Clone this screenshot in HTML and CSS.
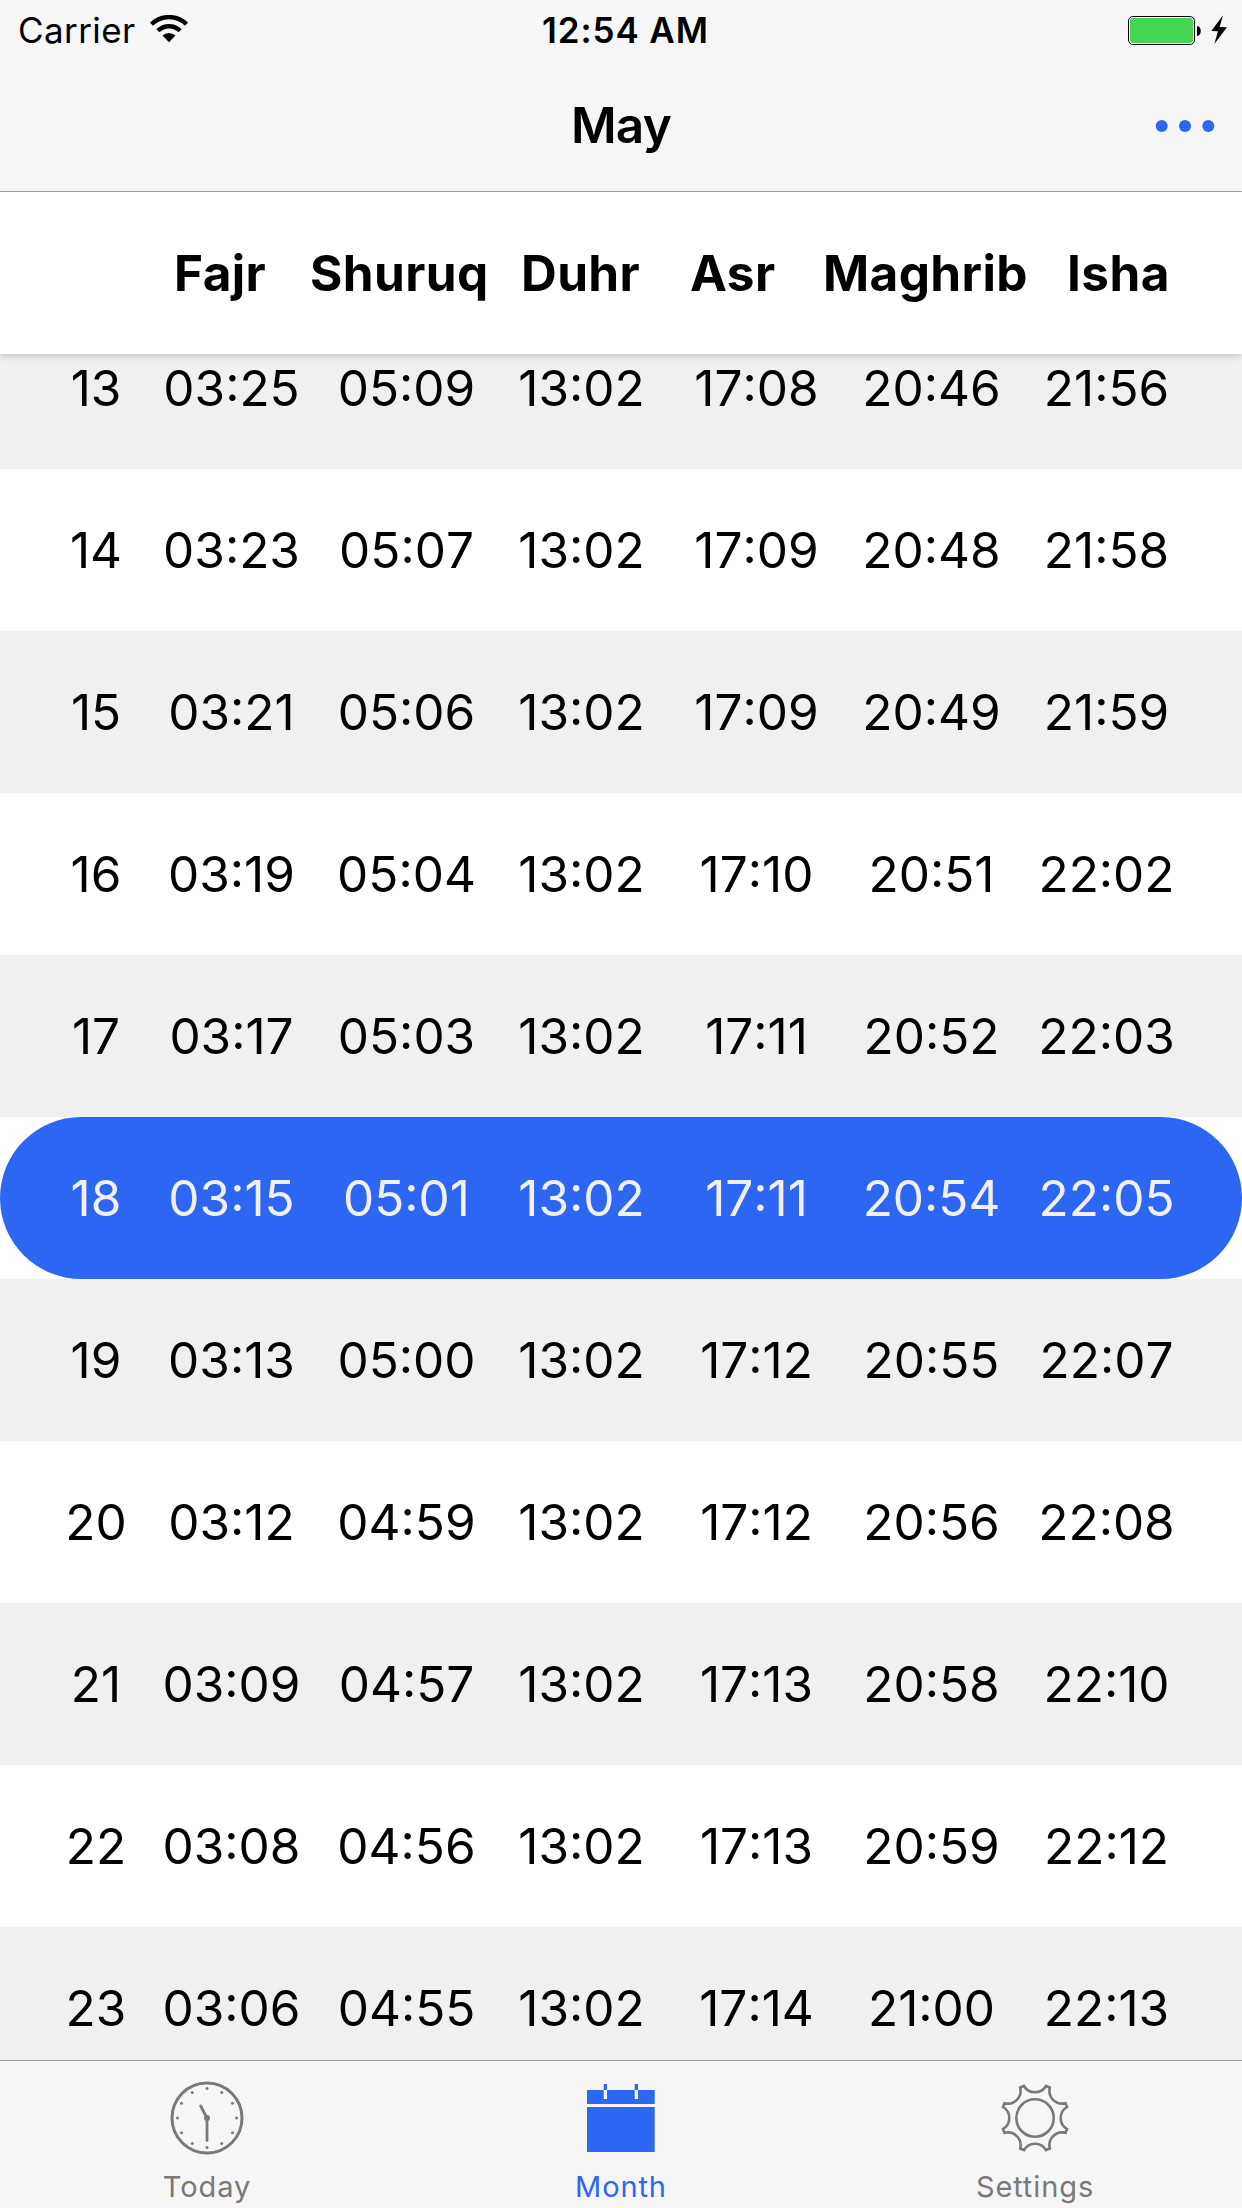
FILE: index.html
```html
<!DOCTYPE html>
<html lang="en">
<head>
<meta charset="utf-8">
<title>May</title>
<link rel="stylesheet" href="styles.css">
</head>
<body>
<div class="app">
  <header class="top">
    <div class="status">
      <div class="status-left"><span class="carrier">Carrier</span>
        <svg class="wifi" width="38" height="28" viewBox="0 0 38 28"><g fill="none" stroke="#000" stroke-width="4.4"><path d="M1.5 9.3A24.8 24.8 0 0 1 36.5 9.3"/><path d="M7.9 15.8A15.8 15.8 0 0 1 30.1 15.8"/></g><path d="M19 27.2L12.6 20.6A9.2 9.2 0 0 1 25.4 20.6Z"/></svg>
      </div>
      <span class="clock">12:54 AM</span>
      <svg class="battery" width="104" height="32" viewBox="0 0 104 32"><rect x="0.5" y="2.5" width="66" height="28" rx="4.5" fill="#fff" stroke="#000"/><rect x="2" y="4" width="63" height="25" rx="3" fill="#44d551"/><path d="M69 12c5 0 5 10 0 10z"/><path d="M95 1.3L83.3 17 90 17.300 86.300 30 99 13.300 91.700 13z"/></svg>
    </div>
    <div class="nav">
      <span></span>
      <h1 class="title">May</h1>
      <svg class="more" width="60" height="14" viewBox="0 0 60 14" fill="#2c66f2"><circle cx="6.700" cy="7" r="6"/><circle cx="30" cy="7" r="6"/><circle cx="53.300" cy="7" r="6"/></svg>
    </div>
  </header>
  <div class="heads"><span>Fajr</span><span>Shuruq</span><span>Duhr</span><span>Asr</span><span>Maghrib</span><span>Isha</span></div>
  <main class="list">
    <div class="row"><span>13</span><span>03:25</span><span>05:09</span><span>13:02</span><span>17:08</span><span>20:46</span><span>21:56</span></div>
    <div class="row"><span>14</span><span>03:23</span><span>05:07</span><span>13:02</span><span>17:09</span><span>20:48</span><span>21:58</span></div>
    <div class="row"><span>15</span><span>03:21</span><span>05:06</span><span>13:02</span><span>17:09</span><span>20:49</span><span>21:59</span></div>
    <div class="row"><span>16</span><span>03:19</span><span>05:04</span><span>13:02</span><span>17:10</span><span>20:51</span><span>22:02</span></div>
    <div class="row"><span>17</span><span>03:17</span><span>05:03</span><span>13:02</span><span>17:11</span><span>20:52</span><span>22:03</span></div>
    <div class="row current"><span>18</span><span>03:15</span><span>05:01</span><span>13:02</span><span>17:11</span><span>20:54</span><span>22:05</span></div>
    <div class="row"><span>19</span><span>03:13</span><span>05:00</span><span>13:02</span><span>17:12</span><span>20:55</span><span>22:07</span></div>
    <div class="row"><span>20</span><span>03:12</span><span>04:59</span><span>13:02</span><span>17:12</span><span>20:56</span><span>22:08</span></div>
    <div class="row"><span>21</span><span>03:09</span><span>04:57</span><span>13:02</span><span>17:13</span><span>20:58</span><span>22:10</span></div>
    <div class="row"><span>22</span><span>03:08</span><span>04:56</span><span>13:02</span><span>17:13</span><span>20:59</span><span>22:12</span></div>
    <div class="row"><span>23</span><span>03:06</span><span>04:55</span><span>13:02</span><span>17:14</span><span>21:00</span><span>22:13</span></div>
  </main>
  <nav class="tabs">
    <div class="tab">
      <svg width="80" height="80" viewBox="-40 -40 80 80" fill="#797979"><circle r="35" fill="none" stroke="#797979" stroke-width="3"/><circle r="3"/><path d="M0 0V22.500M0 0L-6.300-12" stroke="#797979" stroke-width="2.800" stroke-linecap="round"/><circle cy="-29.500" r="1.500"/><circle cy="29.500" r="1.500"/><circle cx="29.500" r="1.500"/><circle cx="-29.500" r="1.500"/><circle cx="14.750" cy="-25.500" r="1.500"/><circle cx="25.500" cy="-14.750" r="1.500"/><circle cx="25.500" cy="14.750" r="1.500"/><circle cx="14.750" cy="25.500" r="1.500"/><circle cx="-14.750" cy="25.500" r="1.500"/><circle cx="-25.500" cy="14.750" r="1.500"/><circle cx="-25.500" cy="-14.750" r="1.500"/><circle cx="-14.750" cy="-25.500" r="1.500"/></svg>
      <span>Today</span>
    </div>
    <div class="tab active">
      <svg width="80" height="80" viewBox="0 0 80 80" fill="#2c66f2"><path d="M6 12H73.700V26H6zM6 29H73.700V74H6z"/><path d="M22.700 12h3.300v9h-3.300zM53.700 12h3.300v9h-3.300z" fill="#f6f6f6"/><path d="M22.700 6h3.300v6h-3.300zM53.700 6h3.300v6h-3.300z"/></svg>
      <span>Month</span>
    </div>
    <div class="tab">
      <svg width="80" height="80" viewBox="-40 -40 80 80" fill="none" stroke="#797979" stroke-width="2.600"><circle r="18.700"/><path d="M-11-32A12.750 12.750 0 0 0 11-32L14.850-30.400A12.750 12.750 0 0 0 30.400-14.850L32-11A12.750 12.750 0 0 0 32 11L30.400 14.850A12.750 12.750 0 0 0 14.850 30.400L11 32A12.750 12.750 0 0 0-11 32L-14.850 30.400A12.750 12.750 0 0 0-30.400 14.850L-32 11A12.750 12.750 0 0 0-32-11L-30.400-14.850A12.750 12.750 0 0 0-14.850-30.400Z"/></svg>
      <span>Settings</span>
    </div>
  </nav>
</div>
</body>
</html>
```

FILE: styles.css
```css
* { box-sizing: border-box; }
body { margin: 0; font-family: Inter, "Liberation Sans", sans-serif; color: #000; background: #fff; }
svg { display: block; flex: none; }
.app { width: 1242px; height: 2208px; display: flex; flex-direction: column; overflow: hidden; }
.top { height: 192px; flex: none; background: #f6f6f6; border-bottom: 1px solid #a0a0a0; }
.status { height: 60px; display: grid; grid-template-columns: 1fr auto 1fr; align-items: center; padding: 0 10px 0 18px; }
.status-left { display: flex; align-items: center; gap: 14px; }
.carrier { font-size: 35px; line-height: 60px; letter-spacing: 0.4px; }
.wifi { margin-bottom: 2px; }
.clock { font-size: 35px; font-weight: 600; line-height: 60px; letter-spacing: 0.9px; padding-left: 1px; }
.battery { justify-self: end; margin-bottom: 1px; }
.nav { height: 131px; display: grid; grid-template-columns: 1fr auto 1fr; align-items: center; padding: 0 27px; }
.title { margin: 0; font-size: 49.5px; font-weight: 600; line-height: 131px; letter-spacing: -0.8px; }
.more { justify-self: end; }
.heads { height: 162px; flex: none; display: grid; grid-template-columns: 136px 211px 169px 133px 244px auto; padding-left: 174px; background: #fff; font-size: 49.5px; font-weight: 700; line-height: 163px; letter-spacing: 0.4px; position: relative; box-shadow: 0 3px 6px rgba(0, 0, 0, 0.15); }
.list { flex: 1; min-height: 0; display: flex; flex-direction: column; justify-content: flex-end; overflow: hidden; margin-bottom: -29px; }
.row { flex: none; height: 162px; display: grid; grid-template-columns: 96px repeat(6, 1fr); padding: 0 48px; text-align: center; font-size: 49.5px; line-height: 162px; font-kerning: none; }
.row:nth-child(odd) { background: #f0f0f0; }
.row.current { background: #2c66f2; color: #f0f0f0; border-radius: 81px; }
.tabs { height: 148px; flex: none; display: grid; grid-template-columns: repeat(3, 414px); background: #f6f6f6; border-top: 1px solid #a0a0a0; position: relative; }
.tab { display: flex; flex-direction: column; align-items: center; padding-top: 17px; color: #797979; font-size: 29px; line-height: 36px; letter-spacing: 0.9px; gap: 11px; }
.tab.active { color: #2c66f2; }
```
